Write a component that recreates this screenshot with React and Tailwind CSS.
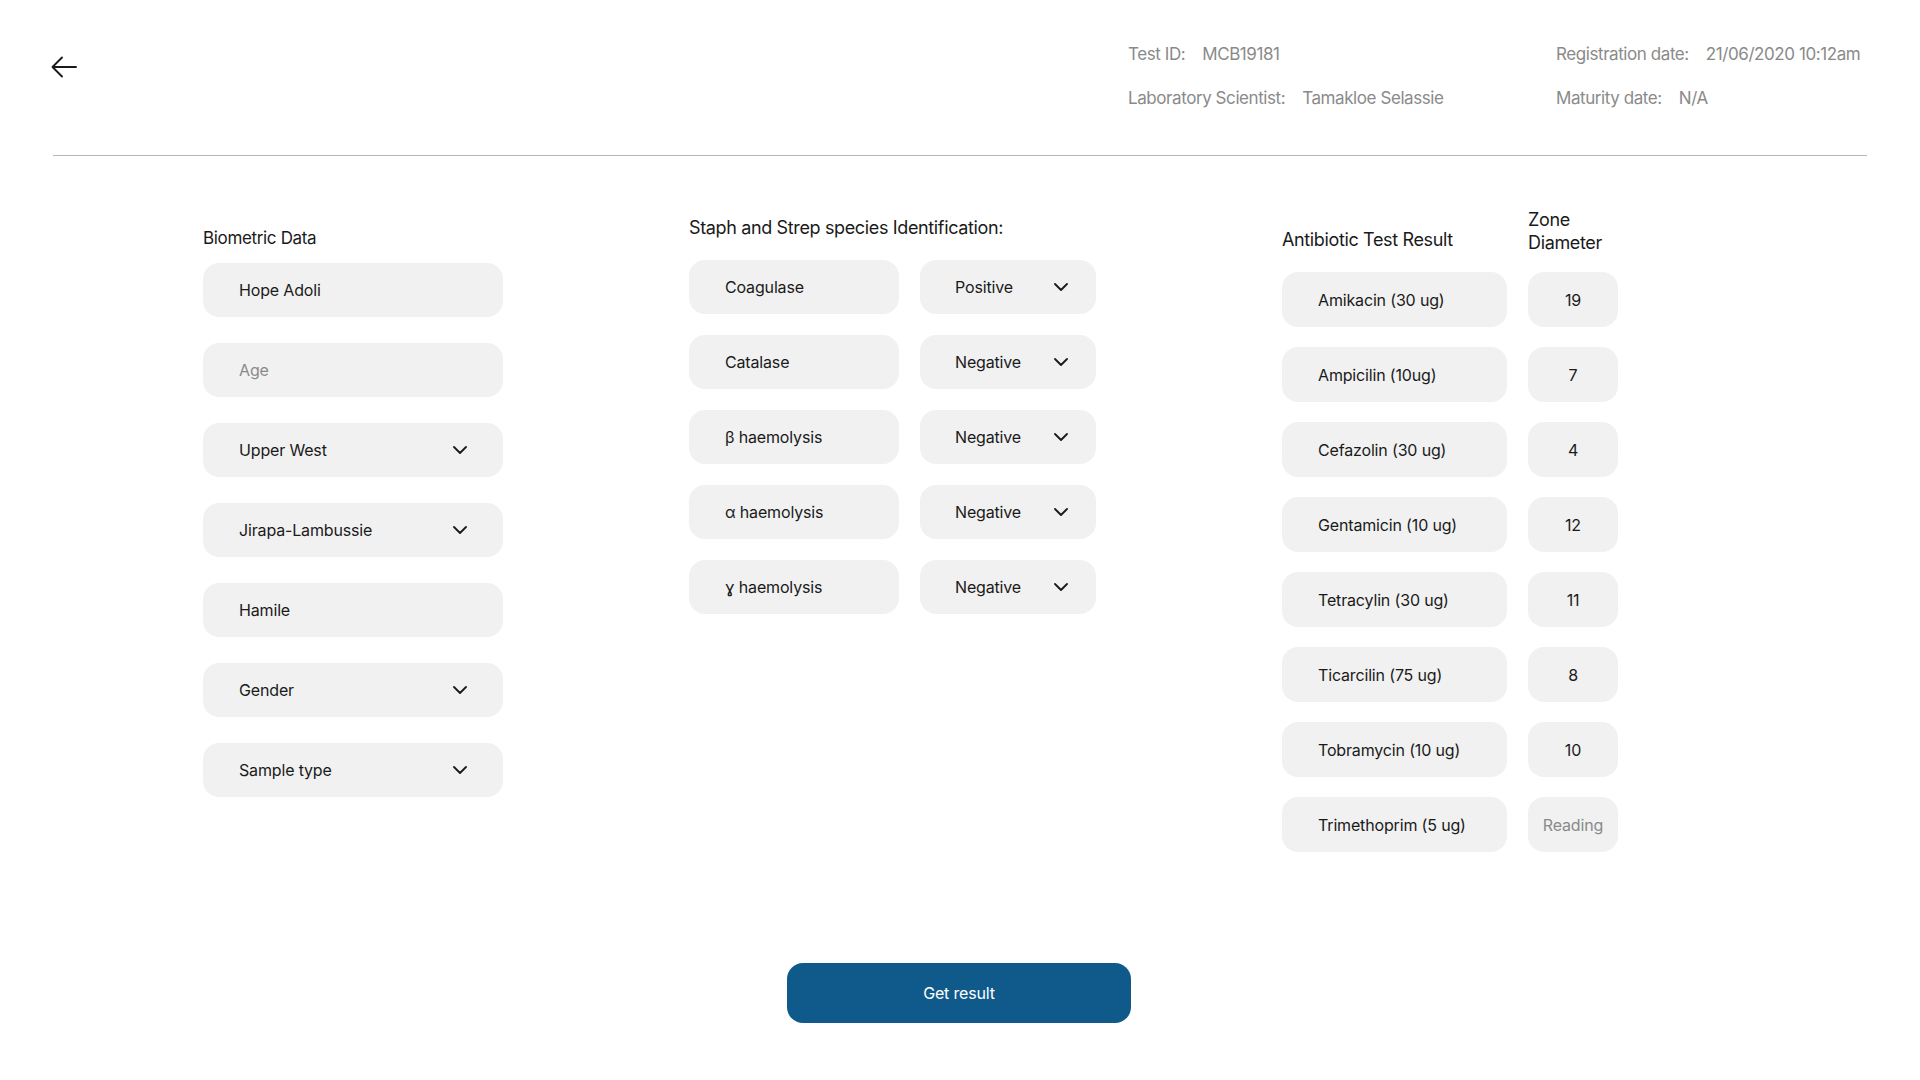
const biometric = [
  { label: "Hope Adoli" },
  { label: "Age", placeholder: true },
  { label: "Upper West", select: true },
  { label: "Jirapa-Lambussie", select: true },
  { label: "Hamile" },
  { label: "Gender", select: true },
  { label: "Sample type", select: true },
];

const tests = [
  ["Coagulase", "Positive"],
  ["Catalase", "Negative"],
  ["β haemolysis", "Negative"],
  ["α haemolysis", "Negative"],
  ["ɣ haemolysis", "Negative"],
];

const antibiotics = [
  ["Amikacin (30 ug)", "19"],
  ["Ampicilin (10ug)", "7"],
  ["Cefazolin (30 ug)", "4"],
  ["Gentamicin (10 ug)", "12"],
  ["Tetracylin (30 ug)", "11"],
  ["Ticarcilin (75 ug)", "8"],
  ["Tobramycin (10 ug)", "10"],
  ["Trimethoprim (5 ug)", null],
];

function Chevron() {
  return (
    <svg width="14" height="8" viewBox="0 0 14 8" fill="none">
      <path d="M1 1l6 6 6-6" stroke="#1a1a1a" strokeWidth="1.8" strokeLinecap="round" strokeLinejoin="round" />
    </svg>
  );
}

function BackArrow() {
  return (
    <svg width="26" height="22" viewBox="0 0 26 22" fill="none">
      <path d="M25 11H2M11 1.5L1.5 11l9.5 9.5" stroke="#1a1a1a" strokeWidth="1.9" strokeLinecap="round" strokeLinejoin="round" />
    </svg>
  );
}

export default function App() {
  return (
    <div className="min-h-screen w-full bg-white text-[#1a1a1a] [font-family:Inter,'Noto_Sans',sans-serif]">
      <header className="px-[53px]">
        <div className="flex items-start justify-between">
          <button className="mt-[56px] ml-[-2px]">
            <BackArrow />
          </button>
          <div className="mt-[44px] flex text-[17px] leading-[20px] tracking-[-0.025em] text-[#8a8a8a]">
            <div className="flex w-[428px] flex-col gap-[24px]">
              <div className="flex gap-[17px]">
                <span>Test ID:</span>
                <span>MCB19181</span>
              </div>
              <div className="flex gap-[17px]">
                <span>Laboratory Scientist:</span>
                <span>Tamakloe Selassie</span>
              </div>
            </div>
            <div className="flex w-[311px] flex-col gap-[24px]">
              <div className="flex gap-[17px]">
                <span>Registration date:</span>
                <span>21/06/2020 10:12am</span>
              </div>
              <div className="flex gap-[17px]">
                <span>Maturity date:</span>
                <span>N/A</span>
              </div>
            </div>
          </div>
        </div>
        <div className="mt-[47px] h-px bg-[#b5b5b5]" />
      </header>

      <main className="flex pl-[203px] text-[16px] tracking-[-0.01em]">
        <section className="mt-[72px] w-[300px]">
          <h2 className="text-[17px] leading-[20px] tracking-[-0.02em]">Biometric Data</h2>
          <div className="mt-[15px] flex flex-col gap-[26px]">
            {biometric.map((f) => (
              <div
                key={f.label}
                className="flex h-[54px] items-center justify-between rounded-[16px] bg-[#f1f1f1] pl-[36px] pr-[36px]"
              >
                <span className={f.placeholder ? "text-[#8a8a8a]" : ""}>{f.label}</span>
                {f.select && <Chevron />}
              </div>
            ))}
          </div>
        </section>

        <section className="ml-[186px] mt-[61px] w-[407px]">
          <h2 className="text-[18px] leading-[22px] tracking-[-0.02em]">Staph and Strep species Identification:</h2>
          <div className="mt-[21px] flex flex-col gap-[21px]">
            {tests.map(([name, value]) => (
              <div key={name} className="flex gap-[21px]">
                <div className="flex h-[54px] w-[210px] items-center rounded-[16px] bg-[#f1f1f1] pl-[36px]">{name}</div>
                <div className="flex h-[54px] w-[176px] items-center justify-between rounded-[16px] bg-[#f1f1f1] pl-[35px] pr-[28px]">
                  <span>{value}</span>
                  <Chevron />
                </div>
              </div>
            ))}
          </div>
        </section>

        <section className="ml-[186px] mt-[52px] w-[336px]">
          <div className="flex items-end gap-[21px] text-[18px] leading-[23px] tracking-[-0.02em]">
            <h2 className="mb-[3px] w-[225px]">Antibiotic Test Result</h2>
            <h2 className="w-[90px]">
              Zone
              <br />
              Diameter
            </h2>
          </div>
          <div className="mt-[18px] flex flex-col gap-[20px]">
            {antibiotics.map(([name, value]) => (
              <div key={name} className="flex gap-[21px]">
                <div className="flex h-[55px] w-[225px] items-center rounded-[16px] bg-[#f1f1f1] pl-[36px]">{name}</div>
                <div className="flex h-[55px] w-[90px] items-center justify-center rounded-[16px] bg-[#f1f1f1]">
                  {value ?? <span className="text-[#8a8a8a]">Reading</span>}
                </div>
              </div>
            ))}
          </div>
        </section>
      </main>

      <div className="mt-[111px] flex pl-[787px]">
        <button className="h-[60px] w-[344px] rounded-[16px] bg-[#0f5a8b] text-[16px] tracking-[-0.01em] text-white">
          Get result
        </button>
      </div>
    </div>
  );
}
